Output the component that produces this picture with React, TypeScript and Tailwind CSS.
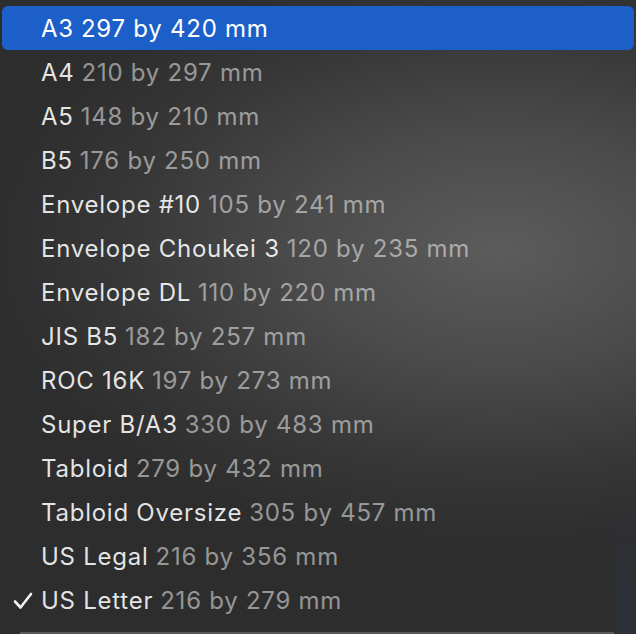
const SIZES: [string, string][] = [
  ['A3', '297 by 420 mm'],
  ['A4', '210 by 297 mm'],
  ['A5', '148 by 210 mm'],
  ['B5', '176 by 250 mm'],
  ['Envelope #10', '105 by 241 mm'],
  ['Envelope Choukei 3', '120 by 235 mm'],
  ['Envelope DL', '110 by 220 mm'],
  ['JIS B5', '182 by 257 mm'],
  ['ROC 16K', '197 by 273 mm'],
  ['Super B/A3', '330 by 483 mm'],
  ['Tabloid', '279 by 432 mm'],
  ['Tabloid Oversize', '305 by 457 mm'],
  ['US Legal', '216 by 356 mm'],
  ['US Letter', '216 by 279 mm'],
];

const HIGHLIGHTED = 'A3';
const CHECKED = 'US Letter';

function Check() {
  return (
    <svg width="20" height="18" viewBox="0 0 20 18" fill="none">
      <path d="M2 9.5 L7.5 15.5 L18 2" stroke="#f2f2f2" strokeWidth="2.6" strokeLinecap="round" strokeLinejoin="round" />
    </svg>
  );
}

export default function App() {
  return (
    <div
      className="relative w-[636px] h-[634px] overflow-hidden bg-[#2e2e2e]"
      style={{
        backgroundImage:
          'radial-gradient(ellipse 520px 300px at 500px 250px, #5c5c5c 0%, #4a4a4a 40%, #363636 75%, #2d2d2d 100%)',
        fontFamily: 'Inter, "Noto Sans", sans-serif',
      }}
    >
      <div className="absolute right-0 top-[460px] bottom-0 w-[21px] bg-gradient-to-b from-transparent to-[#2c3139]" />
      <div className="relative flex flex-col pt-[6px] px-[2px]">
        {SIZES.map(([name, dims], i) => {
          const active = name === HIGHLIGHTED;
          return (
            <div
              key={name}
              className={`flex items-center h-[44px] rounded-[6px] text-[24px] tracking-[0.75px] ${active ? 'bg-[#1d5fc9] pt-[1px]' : ''} ${i > 0 ? 'pt-[2px]' : ''}`}
            >
              <div className="w-[39px] flex justify-center pl-[2px]">
                {name === CHECKED && <Check />}
              </div>
              <span className={active ? 'text-white' : 'text-[rgba(255,255,255,0.88)]'}>{name}</span>
              <span className={`ml-[7px] ${active ? 'text-white' : 'text-[rgba(255,255,255,0.5)]'}`}>{dims}</span>
            </div>
          );
        })}
      </div>
      <div className="absolute left-[20px] right-[22px] bottom-0 h-[2px] bg-[#595959]" />
    </div>
  );
}
